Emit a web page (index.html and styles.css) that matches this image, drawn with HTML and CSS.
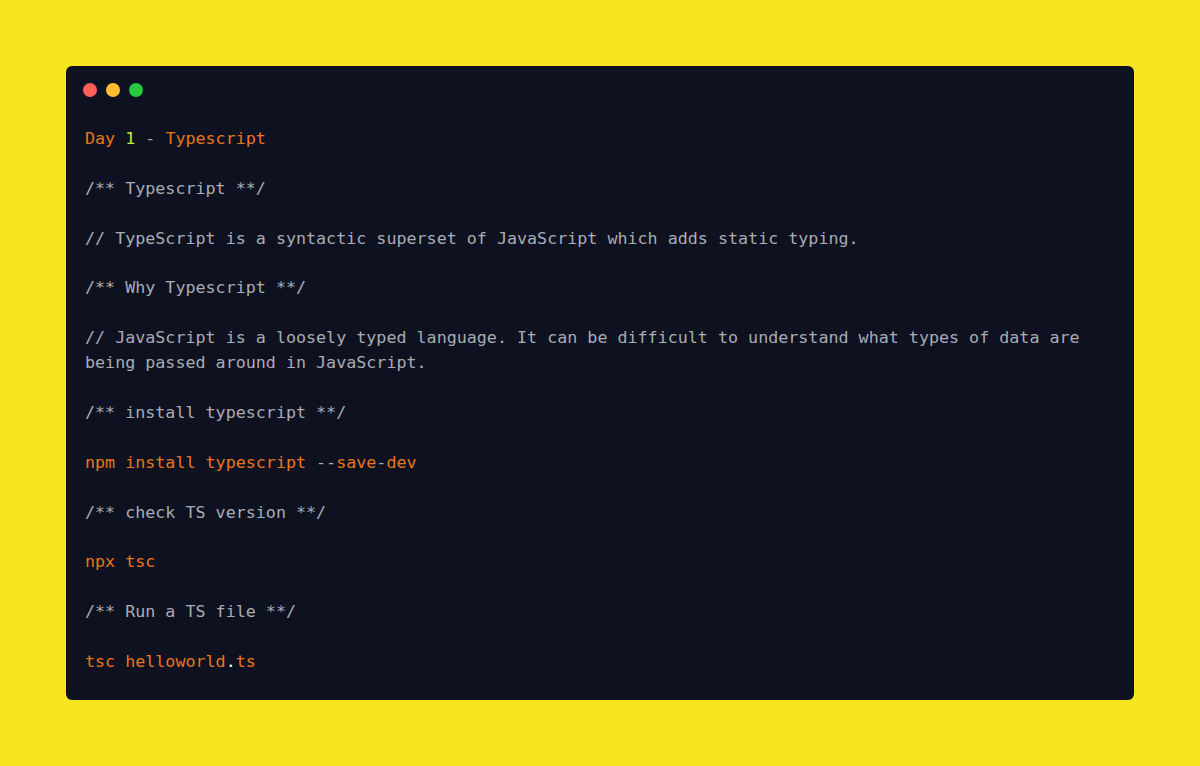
FILE: index.html
```html
<!DOCTYPE html>
<html>
<head>
<meta charset="utf-8">
<link rel="stylesheet" href="styles.css">
</head>
<body>
<div class="page">
  <div class="window">
    <div class="lights">
      <span class="dot red"></span>
      <span class="dot yellow"></span>
      <span class="dot green"></span>
    </div>
    <div class="code"><span class="o">Day</span> <span class="n">1</span> - <span class="o">Typescript</span>

/** Typescript **/

// TypeScript is a syntactic superset of JavaScript which adds static typing.

/** Why Typescript **/

// JavaScript is a loosely typed language. It can be difficult to understand what types of data are
being passed around in JavaScript.

/** install typescript **/

<span class="o">npm install typescript</span> --<span class="o">save</span>-<span class="o">dev</span>

/** check TS version **/

<span class="o">npx tsc</span>

/** Run a TS file **/

<span class="o">tsc helloworld</span><span class="w">.</span><span class="o">ts</span></div>
  </div>
</div>
</body>
</html>
```
FILE: styles.css
```css
html, body {
  margin: 0;
  padding: 0;
}
body {
  background: #f7e51f;
  width: 1200px;
  height: 766px;
  overflow: hidden;
}
.page {
  padding: 66px;
}
.window {
  background: #0e1120;
  border-radius: 6px;
  height: 634px;
  box-sizing: border-box;
  padding: 17px 19px 0 19px;
}
.lights {
  display: flex;
  gap: 9px;
  margin-left: -2px;
}
.dot {
  width: 14px;
  height: 14px;
  border-radius: 50%;
  display: block;
}
.red { background: #ff5f57; }
.yellow { background: #febc2e; }
.green { background: #28c840; }
.code {
  margin-top: 29px;
  white-space: pre;
  font-family: "DejaVu Sans Mono", "Liberation Mono", monospace;
  font-size: 16.7px;
  line-height: 24.9px;
  color: #a8acb4;
}
.o { color: #e8761c; }
.n { color: #c9e84a; }
.w { color: #ffffff; }
```
